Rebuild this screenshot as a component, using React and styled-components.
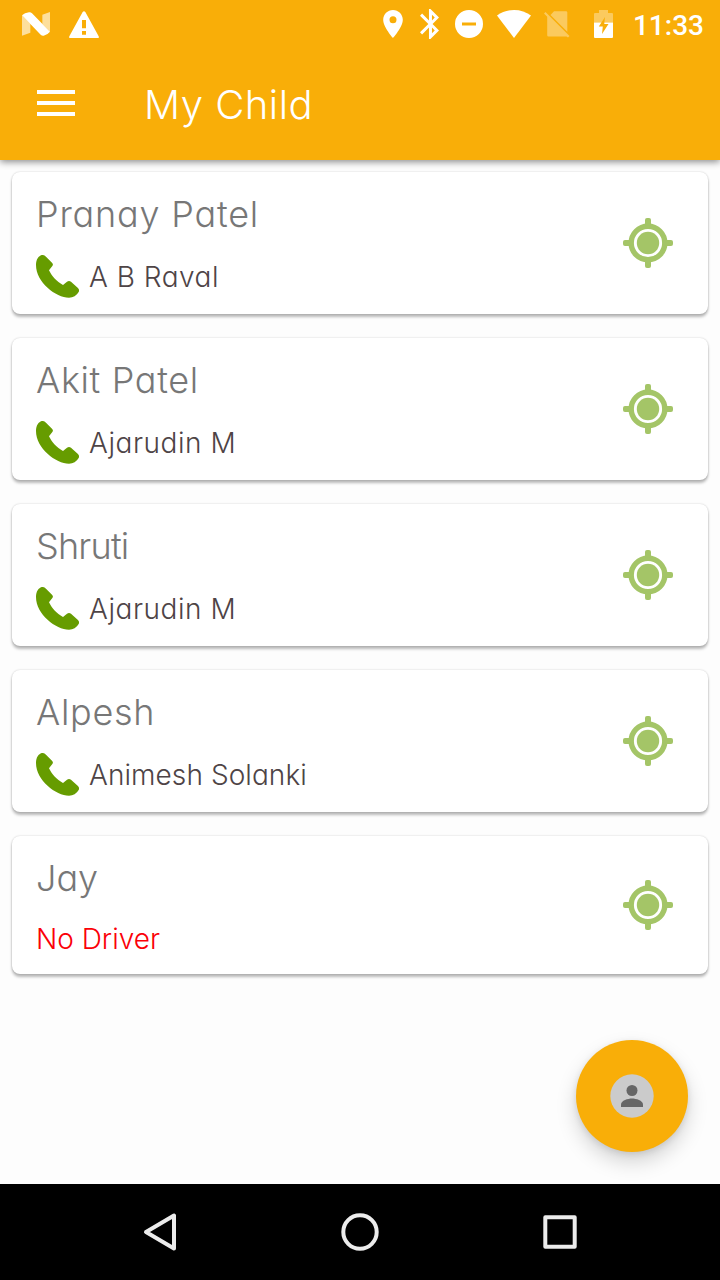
import React from 'react';
import styled, { createGlobalStyle } from 'styled-components';

const GlobalStyle = createGlobalStyle`
    * {
        box-sizing: border-box;
    }
    body {
        margin: 0;
        background: #fdfdfd;
        font-family: Inter, "Open Sans", sans-serif;
        font-feature-settings: "cv11", "ss03";
    }
`;
const Screen = styled.div`
    position: relative;
    display: flex;
    flex-direction: column;
    width: 720px;
    height: 1280px;
    overflow: hidden;
    background: #fdfdfd;
`;
const Header = styled.header`
    background: #f9ae08;
    box-shadow: 0 2px 7px rgba(0, 0, 0, 0.45);
`;
const StatusBar = styled.div`
    display: flex;
    align-items: center;
    height: 48px;
    padding: 0 16px 0 22px;
    color: #ffffff;
`;
const Glyph = styled.svg`
    display: block;
    flex: none;
    margin-left: ${props => props.$gap || 0}px;
    fill: currentColor;
`;
const Clock = styled.span`
    margin-left: auto;
    padding-top: 3px;
    font: 500 28px/32px Roboto, sans-serif;
`;
const Toolbar = styled.div`
    display: flex;
    align-items: center;
    height: 112px;
    padding-left: 37px;
`;
const MenuButton = styled.button`
    display: flex;
    flex-direction: column;
    justify-content: space-between;
    width: 38px;
    height: 26px;
    margin-top: -2px;
    border: 0;
    padding: 0;
    background: none;

    > span {
        height: 4px;
        background: #ffffff;
    }
`;
const Title = styled.h1`
    margin: 2px 0 0 69px;
    color: #ffffff;
    font-size: 40px;
    font-weight: 300;
    line-height: 48px;
    letter-spacing: ${props => props.$spacing}px;
`;
const List = styled.main`
    display: flex;
    flex: 1;
    flex-direction: column;
    gap: 24px;
    padding: 12px;
`;
const Card = styled.section`
    display: flex;
    align-items: center;
    justify-content: space-between;
    padding: 20px 35px 16px 24px;
    border-radius: 8px;
    background: #ffffff;
    box-shadow: 0 3px 3px rgba(0, 0, 0, 0.27), 0 0 2px rgba(0, 0, 0, 0.2);

    > svg {
        margin-top: -4px;
    }
`;
const Name = styled.h2`
    margin: 0 0 18px;
    color: #777777;
    font-size: 36px;
    font-weight: 300;
    line-height: 44px;
    white-space: nowrap;
    letter-spacing: ${props => props.$spacing}px;
`;
const Driver = styled.div`
    display: flex;
    align-items: center;
    gap: 10px;
    height: ${props => (props.$missing ? 40 : 44)}px;
    color: ${props => (props.$missing ? '#fb0007' : '#4e4446')};
    font-size: 28px;
    font-weight: 300;
    line-height: 34px;
    white-space: nowrap;
    letter-spacing: ${props => props.$spacing}px;

    > span {
        padding-top: 2px;
    }
`;
const Fab = styled.button`
    position: absolute;
    right: 32px;
    bottom: 128px;
    display: flex;
    align-items: center;
    justify-content: center;
    width: 112px;
    height: 112px;
    border: 0;
    border-radius: 50%;
    padding: 0;
    background: #f9ae08;
    box-shadow: 0 10px 20px rgba(0, 0, 0, 0.17), 0 2px 6px rgba(0, 0, 0, 0.1);
`;
const NavBar = styled.nav`
    display: flex;
    align-items: center;
    justify-content: center;
    gap: 160px;
    height: 96px;
    background: #000000;

    > svg {
        fill: none;
        stroke: #ececec;
        stroke-width: 4;
        stroke-linejoin: round;
    }
`;

const children = [
    { name: 'Pranay Patel', nameSpacing: 0.8, driver: 'A B Raval', driverSpacing: 0.5 },
    { name: 'Akit Patel', nameSpacing: 0.65, driver: 'Ajarudin M', driverSpacing: 0.55 },
    { name: 'Shruti', nameSpacing: -0.8, driver: 'Ajarudin M', driverSpacing: 0.55 },
    { name: 'Alpesh', nameSpacing: 0.7, driver: 'Animesh Solanki', driverSpacing: 0.07 },
    { name: 'Jay', nameSpacing: 0, driver: null, driverSpacing: 0 }
];

export default function App(){
    return (
        <Screen>
            <GlobalStyle />
            <Header>
                <StatusIcons />
                <Toolbar>
                    <MenuButton aria-label="Menu"><span /><span /><span /></MenuButton>
                    <Title $spacing={0.5}>My Child</Title>
                </Toolbar>
            </Header>
            <List>
                {children.map(child => <ChildCard key={child.name} child={child} />)}
            </List>
            <Fab aria-label="Profile">
                <svg width="44" height="44" viewBox="0 0 44 44">
                    <circle cx="22" cy="22" r="21.7" fill="#cbcbcb" />
                    <circle cx="22" cy="16.5" r="5.5" fill="#666666" />
                    <path d="M11 33v-2.5c0-4 7-6 11-6s11 2 11 6V33z" fill="#666666" />
                </svg>
            </Fab>
            <NavBar>
                <svg width="40" height="40" viewBox="0 0 40 40"><path d="M34 3.5V36.5L6 20z" /></svg>
                <svg width="40" height="40" viewBox="0 0 40 40"><circle cx="20" cy="20" r="16.7" /></svg>
                <svg width="40" height="40" viewBox="0 0 40 40"><rect x="5.3" y="5.3" width="29.4" height="29.4" /></svg>
            </NavBar>
        </Screen>
    );
}

function ChildCard({ child }){
    return (
        <Card>
            <div>
                <Name $spacing={child.nameSpacing}>{child.name}</Name>
                <Driver $missing={!child.driver} $spacing={child.driverSpacing}>
                    {child.driver && <PhoneIcon />}
                    <span>{child.driver || 'No Driver'}</span>
                </Driver>
            </div>
            <LocateIcon />
        </Card>
    );
}

function PhoneIcon(){
    return (
        <svg width="43" height="43" viewBox="0 0 129 129">
            <path
                fill="#669c00"
                d="M0 30C0 13 8 3 17 0q7-1 13 5l18 18q5 5 1 10L39 46C47 63 62 80 81 90l12-10q6-4 12 0l20 18q7 7 3 13-10 17-29 17C60 128 0 82 0 30z"
            />
        </svg>
    );
}

function LocateIcon(){
    return (
        <svg width="50" height="50" viewBox="-25 -25 50 50">
            <g fill="#a4c567">
                <circle r="16.8" fill="none" stroke="#a4c567" strokeWidth="5.4" />
                <rect x="-3" y="-25" width="6" height="8" rx="2" />
                <rect x="-3" y="17" width="6" height="8" rx="2" />
                <rect x="-25" y="-3" width="8" height="6" rx="2" />
                <rect x="17" y="-3" width="8" height="6" rx="2" />
                <circle r="11.2" />
            </g>
        </svg>
    );
}

function StatusIcons(){
    return (
        <StatusBar>
            <Glyph width="28" height="24" viewBox="0 0 84 72">
                <path d="M0 10L25 35V62L0 71zM61 8L84 0V59L61 36z" opacity="0.6" />
                <path d="M0 10Q8 3 21 1q5-1 9 3L84 59Q77 68 65 71q-5 1-9-3z" />
            </Glyph>
            <Glyph $gap={19} width="30" height="27" viewBox="0 0 90 81">
                <path fillRule="evenodd" d="M41 3q4-5 8 0l40 73q2 5-3 5H4q-5 0-3-5zM39 27v25h12V27zM39 60v11h12V60z" />
            </Glyph>
            <Glyph $gap={284} width="20" height="28" viewBox="5 2 14 20">
                <path d="M12 2C8.13 2 5 5.13 5 9c0 5.25 7 13 7 13s7-7.75 7-13c0-3.87-3.13-7-7-7zm0 9.5a2.5 2.5 0 0 1 0-5 2.5 2.5 0 0 1 0 5z" />
            </Glyph>
            <Glyph $gap={17} width="19" height="30" viewBox="5 2 12.71 20">
                <path d="M17.71 7.71L12 2h-1v7.59L6.41 5 5 6.41 10.59 12 5 17.59 6.41 19 11 14.41V22h1l5.71-5.71-4.3-4.29 4.3-4.29zM13 5.83l1.88 1.88L13 9.59V5.83zm1.88 10.46L13 18.17v-3.76l1.88 1.88z" />
            </Glyph>
            <Glyph $gap={16} width="28" height="28" viewBox="2 2 20 20">
                <path d="M12 2a10 10 0 1 0 0 20 10 10 0 0 0 0-20zm5 11H7v-2h10v2z" />
            </Glyph>
            <Glyph $gap={14} width="34" height="28" viewBox="0 0 34 28">
                <path d="M17 28L0 5.5C5 2 10.5 0 17 0s12 2 17 5.5z" />
            </Glyph>
            <Glyph $gap={13} width="26" height="29" viewBox="0 0 26 29" opacity="0.35">
                <path d="M23.3 2.500V21.700L6.500 4.900 10 1.300h12q1.300 0 1.300 1.200z" />
                <path d="M1.5 2L25.500 26 24 27.500 22.500 26.500H4.500q-1.300 0-1.300-1.300V6.700L0 3.500z" />
            </Glyph>
            <Glyph $gap={24} width="19" height="28" viewBox="0 0 19 28">
                <path opacity="0.35" d="M0 12.5V4q0-1 1-1h4V0h9v3h4q1 0 1 1v8.5h-8.600L11 7 7.400 12.500z" />
                <path d="M0 12.5H7.400L4.800 16.500H8.800L8 24 14.500 14H10.300L10.400 12.500H19V27q0 1-1 1H1q-1 0-1-1z" />
            </Glyph>
            <Clock>11:33</Clock>
        </StatusBar>
    );
}
